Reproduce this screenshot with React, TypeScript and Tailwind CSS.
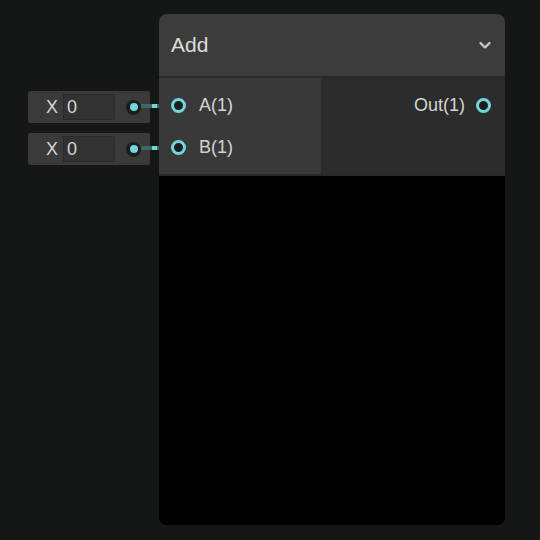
import React from 'react';

const font = { fontFamily: '"Liberation Sans", Arial, sans-serif' };

function InputWidget({ top }: { top: number }) {
  return (
    <div
      className="absolute left-[28px] w-[122px] h-[32px] rounded-[2px] bg-[#3a3a3a] flex items-center"
      style={{ top }}
    >
      <span className="ml-[18px] text-[18px] text-[#d6d6d6] leading-none">X</span>
      <div className="ml-[5px] w-[52px] h-[26px] bg-[#323232] border border-[#2a2a2a] flex items-center">
        <span className="ml-[3px] text-[18px] text-[#d6d6d6] leading-none">0</span>
      </div>
      <div className="ml-[11px] w-[15px] h-[15px] rounded-full bg-[#1c1c1c] flex items-center justify-center">
        <div className="w-[8px] h-[8px] rounded-full bg-[#6fd6dc]" />
      </div>
    </div>
  );
}

function Wire({ top }: { top: number }) {
  return (
    <div className="absolute left-[141px] w-[30px] h-[4px] flex" style={{ top }}>
      <div className="w-[11px] h-full bg-[#3f6567]" />
      <div className="w-[5px] h-full bg-[#6fd6dc]" />
      <div className="flex-1 h-full bg-[#3f6567]" />
    </div>
  );
}

function Port() {
  return <div className="w-[15px] h-[15px] rounded-full border-[3px] border-[#6fd6dc] bg-[#1c1c1c]" />;
}

export default function App() {
  return (
    <div className="relative w-[540px] h-[540px] bg-[#151717] overflow-hidden" style={font}>
      <InputWidget top={91} />
      <InputWidget top={133} />
      <Wire top={104} />
      <Wire top={146} />

      <div className="absolute left-[159px] top-[14px] w-[346px] h-[511px] rounded-[8px] overflow-hidden flex flex-col bg-black">
        {/* Header */}
        <div className="h-[64px] bg-[#3c3c3c] flex items-center justify-between px-[12px] border-b-[2px] border-[#2a2a2a]">
          <span className="text-[21px] text-[#dcdcdc]">Add</span>
          <svg width="16" height="16" viewBox="0 0 16 16">
            <path d="M3.5 6 L8 10.5 L12.5 6" stroke="#c8c8c8" strokeWidth="2.4" fill="none" strokeLinecap="round" strokeLinejoin="round" />
          </svg>
        </div>
        {/* Ports */}
        <div className="h-[98px] flex border-b-[2px] border-[#2a2a2a]">
          <div className="w-[164px] bg-[#393939] border-r-[2px] border-[#2a2a2a] flex flex-col pt-[20px] gap-[27px]">
            <div className="flex items-center h-[15px]">
              <div className="ml-[12px]"><Port /></div>
              <span className="ml-[13px] text-[18px] text-[#d4d4d4]">A(1)</span>
            </div>
            <div className="flex items-center h-[15px]">
              <div className="ml-[12px]"><Port /></div>
              <span className="ml-[13px] text-[18px] text-[#d4d4d4]">B(1)</span>
            </div>
          </div>
          <div className="flex-1 bg-[#2c2c2c] flex flex-col items-end pt-[20px]">
            <div className="flex items-center h-[15px] mr-[14px]">
              <span className="mr-[11px] text-[18px] text-[#d4d4d4]">Out(1)</span>
              <Port />
            </div>
          </div>
        </div>
        <div className="flex-1 bg-black" />
      </div>
    </div>
  );
}
